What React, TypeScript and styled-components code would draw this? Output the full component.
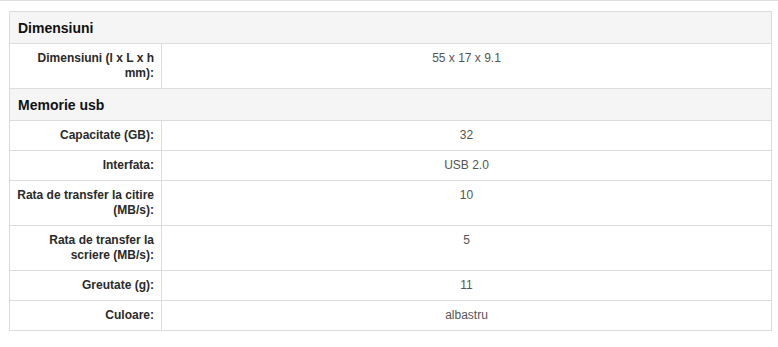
import { FC, Fragment } from "react";
import { styled, createGlobalStyle } from "styled-components";

interface Spec {
  label: string;
  value: string;
}

interface Group {
  title: string;
  specs: Spec[];
}

const groups: Group[] = [
  {
    title: "Dimensiuni",
    specs: [{ label: "Dimensiuni (l x L x h mm):", value: "55 x 17 x 9.1" }],
  },
  {
    title: "Memorie usb",
    specs: [
      { label: "Capacitate (GB):", value: "32" },
      { label: "Interfata:", value: "USB 2.0" },
      { label: "Rata de transfer la citire (MB/s):", value: "10" },
      { label: "Rata de transfer la scriere (MB/s):", value: "5" },
      { label: "Greutate (g):", value: "11" },
      { label: "Culoare:", value: "albastru" },
    ],
  },
];

const GlobalStyle = createGlobalStyle`
  body {
    margin: 0;
    background: #fff;
    font-family: "Liberation Sans", Arial, sans-serif;
  }
`;

const Wrapper = styled.div`
  border-top: 1px solid #dedede;
  padding: 10px 6px 0 9px;
`;

const SpecTable = styled.table`
  width: 763px;
  border-collapse: collapse;
  border: 1px solid #dcdcdc;
  font-size: 12px;
  line-height: 15px;
`;

const GroupTitle = styled.th`
  background: #f5f5f5;
  border: 1px solid #dcdcdc;
  padding: 8px 8px 7px;
  text-align: left;
  font-size: 14px;
  line-height: 16px;
  font-weight: bold;
  color: #111;
`;

const Label = styled.td`
  width: 141px;
  border: 1px solid #dcdcdc;
  padding: 7px 7px 7px 3px;
  text-align: right;
  vertical-align: top;
  font-weight: bold;
  color: #2a2a2a;
`;

const Value = styled.td`
  border: 1px solid #dcdcdc;
  padding: 7px 8px;
  text-align: center;
  vertical-align: top;
  color: #555;
`;

const App: FC = () => {
  return (
    <>
      <GlobalStyle />
      <Wrapper>
        <SpecTable>
          <tbody>
            {groups.map((g) => (
              <Fragment key={g.title}>
                <tr>
                  <GroupTitle colSpan={2}>{g.title}</GroupTitle>
                </tr>
                {g.specs.map((s) => (
                  <tr key={s.label}>
                    <Label>{s.label}</Label>
                    <Value>{s.value}</Value>
                  </tr>
                ))}
              </Fragment>
            ))}
          </tbody>
        </SpecTable>
      </Wrapper>
    </>
  );
};

export default App;
